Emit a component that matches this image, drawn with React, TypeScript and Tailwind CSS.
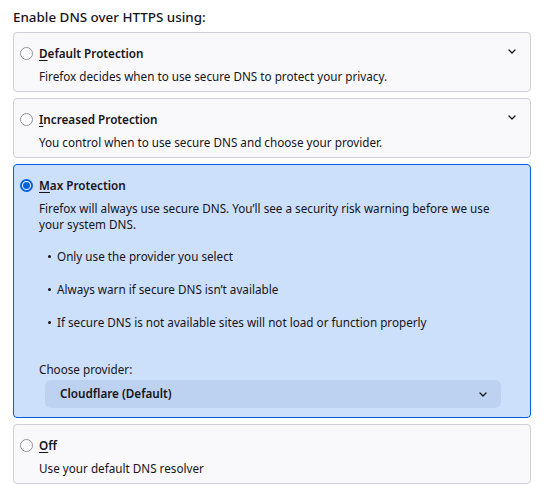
import { useState } from 'react';

type Mode = { id: string; key: string; rest: string; desc: string };

const modes: Mode[] = [
  { id: 'default', key: 'D', rest: 'efault Protection', desc: 'Firefox decides when to use secure DNS to protect your privacy.' },
  { id: 'increased', key: 'I', rest: 'ncreased Protection', desc: 'You control when to use secure DNS and choose your provider.' },
  { id: 'max', key: 'M', rest: 'ax Protection', desc: 'Firefox will always use secure DNS. You’ll see a security risk warning before we use your system DNS.' },
  { id: 'off', key: 'O', rest: 'ff', desc: 'Use your default DNS resolver' },
];

const bullets = [
  'Only use the provider you select',
  'Always warn if secure DNS isn’t available',
  'If secure DNS is not available sites will not load or function properly',
];

function Chevron({ className }: { className?: string }) {
  return (
    <svg width="8" height="5" viewBox="0 0 8 5" className={className} fill="none">
      <path d="M1 1l3 3 3-3" stroke="currentColor" strokeWidth="1.3" strokeLinecap="round" strokeLinejoin="round" />
    </svg>
  );
}

function Radio({ checked }: { checked: boolean }) {
  return checked ? (
    <span className="w-[13px] h-[13px] rounded-full border-2 border-[#0061e0] bg-white flex items-center justify-center shrink-0">
      <span className="w-[7px] h-[7px] rounded-full bg-[#0061e0]" />
    </span>
  ) : (
    <span className="w-[13px] h-[13px] rounded-full border border-[#8f8f9d] bg-white shrink-0" />
  );
}

export default function App() {
  const [selected, setSelected] = useState('max');

  return (
    <div className="w-[546px] h-[500px] bg-white text-[#15141a] pl-[13px] pr-[15px] pt-2" style={{ fontFamily: '"Noto Sans", sans-serif' }}>
      <h1 className="text-[13.4px] leading-[18px] font-medium mb-[6px]">Enable DNS over HTTPS using:</h1>
      <div className="flex flex-col gap-[6px]">
        {modes.map(m => {
          const on = selected === m.id;
          return (
            <div
              key={m.id}
              onClick={() => setSelected(m.id)}
              className={`rounded-[4px] border pt-[11px] pb-[7px] pl-[6px] pr-[14px] text-[11.7px] ${on ? 'bg-[#cde0fb] border-[#0061e0] pb-[9px]' : 'bg-[#f9f9fb] border-[#cfcfd8]'}`}
            >
              <div className="flex items-center h-[18px]">
                <Radio checked={on} />
                <span className="ml-[6px] font-semibold leading-[18px]">
                  <u className="underline-offset-2">{m.key}</u>{m.rest}
                </span>
                {(m.id === 'default' || m.id === 'increased') && <Chevron className="ml-auto -mt-[4px]" />}
              </div>
              <div className="pl-[19px]">
                <p className="mt-[6px] leading-[16px]">{m.desc}</p>
                {on && m.id === 'max' && (
                  <>
                    <ul className="mt-[16px] flex flex-col gap-[17px]">
                      {bullets.map(b => (
                        <li key={b} className="flex items-center leading-[16px]">
                          <span className="w-[3px] h-[3px] rounded-full bg-[#15141a] ml-[9px] mr-[6px]" />
                          {b}
                        </li>
                      ))}
                    </ul>
                    <p className="mt-[31px] leading-[16px]">Choose provider:</p>
                    <div className="mt-[3px] ml-[6px] mr-[15px] h-[28px] rounded-[6px] bg-[#bdd1f0] flex items-center pl-[15px] pr-[14px] font-semibold">
                      <span>Cloudflare (Default)</span>
                      <Chevron className="ml-auto" />
                    </div>
                  </>
                )}
              </div>
            </div>
          );
        })}
      </div>
    </div>
  );
}
